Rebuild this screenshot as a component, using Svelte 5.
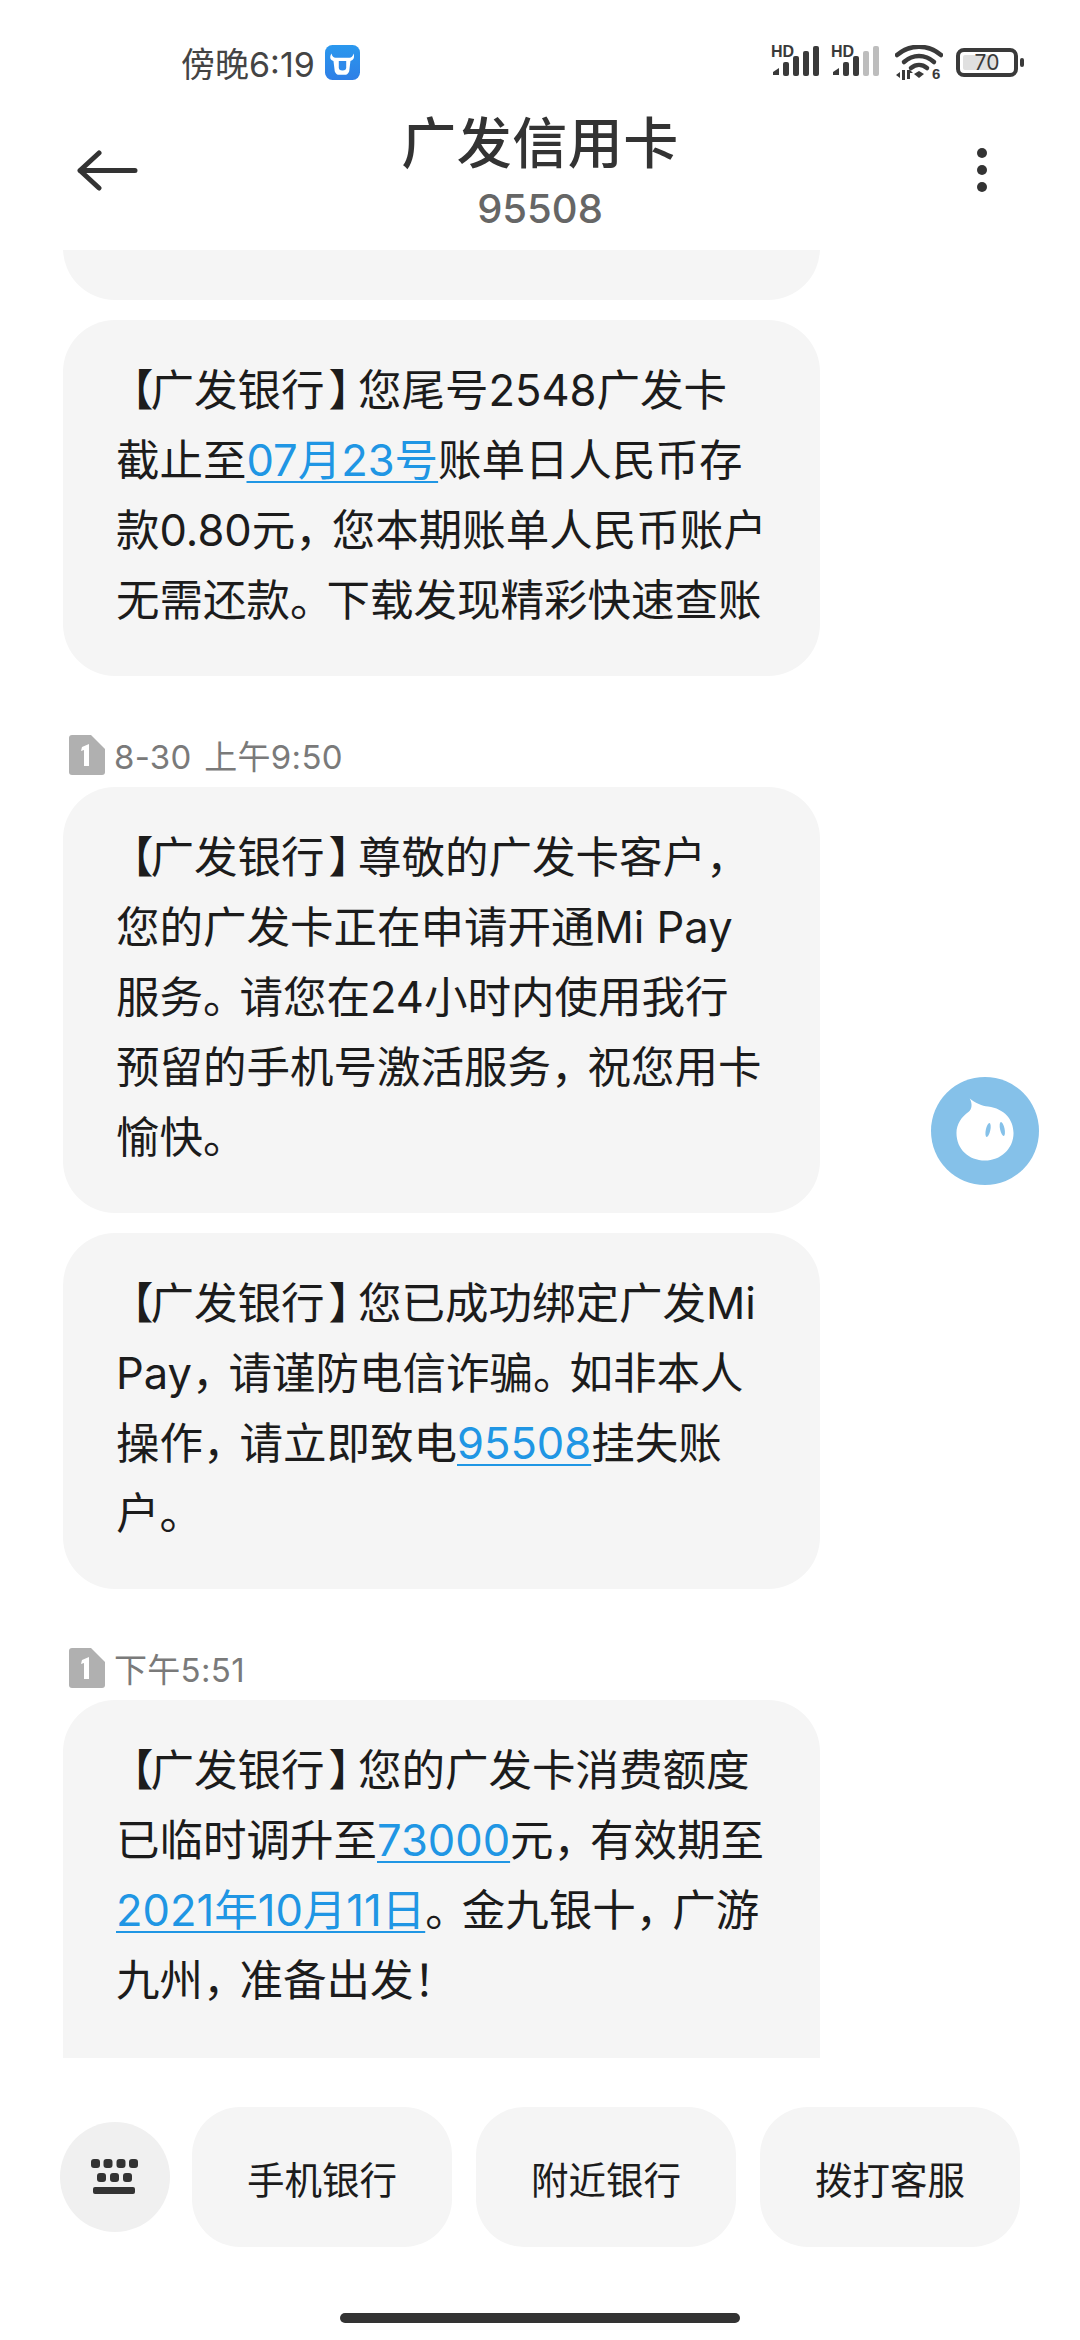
<script>
  const chips = ["手机银行", "附近银行", "拨打客服"];
</script>

{#snippet signal(dim)}
  <div class="signal">
    <span class="hd">HD</span>
    <svg width="50" height="31" viewBox="0 0 50 31">
      <path d="M2 30v-3l6-4v7z" fill="#3a3a3a" />
      <rect x="12" y="17" width="6" height="14" rx="2" fill="#3a3a3a" />
      <rect x="22" y="11" width="6" height="20" rx="2" fill="#3a3a3a" />
      <rect x="32" y="6" width="6" height="25" rx="2" fill={dim ? "#bdbdbd" : "#3a3a3a"} />
      <rect x="42" y="1" width="6" height="30" rx="2" fill={dim ? "#bdbdbd" : "#3a3a3a"} />
    </svg>
  </div>
{/snippet}

{#snippet sim()}
  <svg class="sim" width="36" height="40" viewBox="0 0 36 40">
    <path d="M3 0h19l14 14v23a3 3 0 0 1-3 3H3a3 3 0 0 1-3-3V3a3 3 0 0 1 3-3z" fill="#b0b0b0" />
    <path d="M13 12l7-3v22h-5V15l-3 1z" fill="#fff" />
  </svg>
{/snippet}

<div class="phone">
  <div class="status">
    <div class="clock">
      <span>傍晚6:19</span>
      <svg width="35" height="35" viewBox="0 0 33 33">
        <defs>
          <linearGradient id="ox" x1="0" y1="0" x2="0" y2="1">
            <stop offset="0" stop-color="#2a98ee" />
            <stop offset="1" stop-color="#2f7fe6" />
          </linearGradient>
        </defs>
        <rect width="33" height="33" rx="7" fill="url(#ox)" />
        <path d="M6 8c1 3 2 4 4 4h13c2 0 3-1 4-4 1 4 0 6-3 7l-1 8c0 3-2 5-4 5h-6c-2 0-4-2-4-5l-1-8c-3-1-4-3-2-7z" fill="#fff" />
        <path d="M13 15h7v6c0 2-1 3-3.500 3s-3.500-1-3.500-3z" fill="#2f8aea" />
      </svg>
    </div>
    <div class="indicators">
      {@render signal(false)}
      {@render signal(true)}
      <svg class="wifi" width="48" height="38" viewBox="0 0 48 38">
        <g fill="none" stroke="#3a3a3a" stroke-width="4.500" stroke-linecap="round">
          <path d="M2 10C15 -1 33 -1 46 10" />
          <path d="M9 17c9-8 21-8 30 0" />
          <path d="M16 23c5-4 11-4 16 0" />
        </g>
        <path d="M19 29l5-3 5 3-5 4z" fill="#3a3a3a" />
        <path d="M1 30l4-3v6zM7 25h3v10H7zM12 25h3l3 3h-3v6h-3z" fill="#3a3a3a" />
        <text x="37" y="34" class="wifi-six">6</text>
      </svg>
      <div class="battery">
        <div class="cell">
          <div class="fill"></div>
          <span>70</span>
        </div>
        <div class="nub"></div>
      </div>
    </div>
  </div>

  <header>
    <svg class="back" width="62" height="42" viewBox="0 0 62 42">
      <path d="M22 3L3 20.500 22 38M3 20.500h55" fill="none" stroke="#333" stroke-width="5" stroke-linecap="round" stroke-linejoin="round" />
    </svg>
    <div class="title">
      <h1>广发信用卡</h1>
      <p>95508</p>
    </div>
    <div class="more"><i></i><i></i><i></i></div>
  </header>

  <main>
    <div class="thread">
      <div class="bubble stub"></div>
      <div class="bubble">
        <span class="lb">【</span>广发银行<span class="rb">】</span>您尾号2548广发卡<br />
        截止至<a href="#a">07月23号</a>账单日人民币存<br />
        款0.80元<span class="cm">，</span>您本期账单人民币账户<br />
        无需还款<span class="cm">。</span>下载发现精彩快速查账
      </div>

      <div class="stamp">{@render sim()}<span>8-30 上午9:50</span></div>
      <div class="bubble">
        <span class="lb">【</span>广发银行<span class="rb">】</span>尊敬的广发卡客户，<br />
        您的广发卡正在申请开通Mi Pay<br />
        服务<span class="cm">。</span>请您在24小时内使用我行<br />
        预留的手机号激活服务<span class="cm">，</span>祝您用卡<br />
        愉快。
      </div>
      <div class="bubble">
        <span class="lb">【</span>广发银行<span class="rb">】</span>您已成功绑定广发Mi<br />
        Pay<span class="cm">，</span>请谨防电信诈骗<span class="cm">。</span>如非本人<br />
        操作<span class="cm">，</span>请立即致电<a href="#a">95508</a>挂失账<br />
        户。
      </div>

      <div class="stamp">{@render sim()}<span>下午5:51</span></div>
      <div class="bubble cut">
        <span class="lb">【</span>广发银行<span class="rb">】</span>您的广发卡消费额度<br />
        已临时调升至<a href="#a">73000</a>元<span class="cm">，</span>有效期至<br />
        <a href="#a">2021年10月11日</a><span class="cm">。</span>金九银十<span class="cm">，</span>广游<br />
        九州<span class="cm">，</span>准备出发！
      </div>
    </div>
  </main>

  <footer>
    <div class="keys">
      <svg width="48" height="36" viewBox="0 0 48 36">
        <g fill="#333">
          <rect x="0" y="0" width="9" height="9" rx="3" />
          <rect x="12.500" y="0" width="9" height="9" rx="3" />
          <rect x="25.500" y="0" width="9" height="9" rx="3" />
          <rect x="38" y="0" width="9" height="9" rx="3" />
          <rect x="6" y="14" width="9" height="9" rx="3" />
          <rect x="19" y="14" width="9" height="9" rx="3" />
          <rect x="32" y="14" width="9" height="9" rx="3" />
          <rect x="2" y="28" width="42" height="7" rx="2" />
        </g>
      </svg>
    </div>
    {#each chips as chip}
      <button>{chip}</button>
    {/each}
  </footer>
  <div class="home"><span></span></div>

  <div class="assistant">
    <svg width="108" height="108" viewBox="0 0 106 106">
      <path d="M38 21C44 26 50 28 56 29 72 31 81 42 81 55 81 71 68 82 53 82 37 82 25 71 25 55 25 46 30 39 37 34 40 32 41 26 38 21z" fill="#fff" />
      <g fill="#85c1e9">
        <ellipse cx="56" cy="52" rx="2.200" ry="7" transform="rotate(12 56 52)" />
        <ellipse cx="70" cy="51" rx="2.200" ry="7" transform="rotate(-12 70 51)" />
      </g>
    </svg>
  </div>
</div>

<style>
  :global(body) {
    background: #fff;
  }
  .phone {
    position: relative;
    width: 1080px;
    height: 2340px;
    display: flex;
    flex-direction: column;
    overflow: hidden;
    background: #fff;
    color: #1c1c1c;
    font-family: Inter, "Noto Sans CJK SC", sans-serif;
  }

  .status {
    height: 82px;
    padding: 45px 56px 0 181px;
    box-sizing: border-box;
    display: flex;
    justify-content: space-between;
    align-items: flex-start;
    flex: none;
  }
  .clock {
    display: flex;
    align-items: center;
    gap: 10px;
    height: 35px;
    font-size: 34px;
    color: #444;
  }
  .indicators {
    display: flex;
    align-items: flex-start;
    gap: 10px;
  }
  .signal {
    position: relative;
    width: 50px;
    height: 31px;
  }
  .hd {
    position: absolute;
    left: 0;
    top: 0;
    font: 700 16px/14px "Liberation Sans", sans-serif;
    color: #3a3a3a;
  }
  .wifi {
    margin-left: 4px;
  }
  .wifi-six {
    font: 700 15px "Liberation Sans", sans-serif;
    fill: #3a3a3a;
  }
  .battery {
    display: flex;
    align-items: center;
    gap: 2px;
    margin-left: 3px;
    height: 35px;
  }
  .cell {
    position: relative;
    width: 54px;
    height: 21px;
    border: 4px solid #3a3a3a;
    border-radius: 8px;
    display: flex;
    align-items: center;
    justify-content: center;
  }
  .fill {
    position: absolute;
    left: 3px;
    top: 3px;
    bottom: 3px;
    width: 34px;
    background: #e0e0e0;
    border-radius: 2px;
  }
  .cell span {
    position: relative;
    font-size: 21px;
    line-height: 21px;
    color: #3a3a3a;
  }
  .nub {
    width: 4px;
    height: 9px;
    border-radius: 2px;
    background: #3a3a3a;
  }

  header {
    position: relative;
    height: 168px;
    flex: none;
  }
  .title {
    text-align: center;
  }
  h1 {
    margin: 0;
    padding-top: 24px;
    font-size: 55px;
    font-weight: 500;
    line-height: 74px;
    letter-spacing: 0.5px;
    color: #333;
  }
  .title p {
    margin: 0;
    font-size: 40px;
    line-height: 58px;
    font-weight: 500;
    color: #666;
  }
  .back {
    position: absolute;
    left: 77px;
    top: 68px;
  }
  .more {
    position: absolute;
    left: 977px;
    top: 66px;
    display: flex;
    flex-direction: column;
    gap: 7px;
  }
  .more i {
    width: 10px;
    height: 10px;
    border-radius: 50%;
    background: #333;
  }

  main {
    height: 1808px;
    flex: none;
    overflow: hidden;
  }
  .thread {
    display: flex;
    flex-direction: column;
    align-items: flex-start;
    padding-left: 63px;
    margin-top: -150px;
  }
  .bubble {
    width: 757px;
    box-sizing: border-box;
    padding: 35px 0 41px 53px;
    margin-bottom: 20px;
    border-radius: 52px;
    background: #f5f5f5;
    font-size: 43.500px;
    line-height: 70px;
    white-space: nowrap;
  }
  .stub {
    height: 200px;
  }
  .cut {
    padding-bottom: 120px;
  }
  .lb {
    margin-left: -6px;
    letter-spacing: -3px;
  }
  .rb {
    margin-left: 4px;
    letter-spacing: -14px;
  }
  .cm {
    letter-spacing: -7px;
  }
  .bubble a {
    color: #2096e4;
    text-decoration: underline;
    text-underline-offset: 5px;
    text-decoration-thickness: 2px;
  }
  .stamp {
    display: flex;
    align-items: center;
    gap: 9px;
    height: 40px;
    margin: 39px 0 12px 6px;
    font-size: 33px;
    letter-spacing: 0.3px;
    word-spacing: 3px;
    color: #7a7a7a;
  }

  footer {
    height: 140px;
    margin-top: 49px;
    padding-left: 60px;
    display: flex;
    align-items: center;
    gap: 24px;
    flex: none;
  }
  .keys {
    width: 110px;
    height: 110px;
    margin-right: -2px;
    border-radius: 50%;
    background: #f0f0f0;
    display: flex;
    align-items: center;
    justify-content: center;
  }
  button {
    width: 260px;
    height: 140px;
    border: 0;
    border-radius: 48px;
    background: #f5f5f5;
    color: #1c1c1c;
    font: inherit;
    font-size: 37.500px;
    padding: 0;
  }
  .home {
    flex: none;
    padding-top: 66px;
    display: flex;
    justify-content: center;
  }
  .home span {
    width: 400px;
    height: 10px;
    border-radius: 5px;
    background: #333;
  }

  .assistant {
    position: absolute;
    left: 931px;
    top: 1077px;
    width: 108px;
    height: 108px;
    border-radius: 50%;
    background: #85c1e9;
  }
  .assistant svg {
    display: block;
  }
</style>
